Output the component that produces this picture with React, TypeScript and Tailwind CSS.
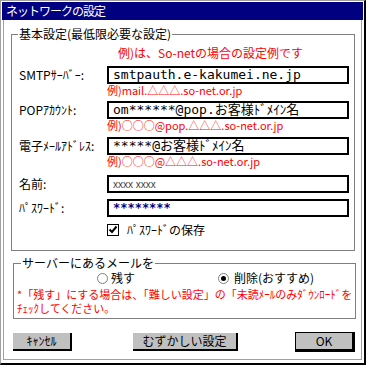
import React from "react";

const jp = "font-['Noto_Sans_CJK_JP',sans-serif]";
const mono = "font-['DejaVu_Sans_Mono','Noto_Sans_CJK_JP',monospace]";

function Field({ label, value, hint, className = "", valueClass = "" }) {
  return (
    <>
      <div className={`flex items-center h-[18px] pl-[7px] ${className}`}>
        <span className="w-[88px] text-[12px] leading-[18px] text-black whitespace-nowrap">{label}</span>
        <div className={`w-[242px] h-[18px] border-2 border-black bg-white pl-[4px] flex items-center whitespace-nowrap overflow-hidden ${valueClass}`}>
          {value}
        </div>
      </div>
      {hint && (
        <div className="pl-[95px] h-[12px] text-[11px] leading-[12px] text-[#ff0000] whitespace-nowrap">{hint}</div>
      )}
    </>
  );
}

function Button({ children, w, className = "" }) {
  return (
    <div
      className={`h-[18px] bg-[#c0c0c0] border-r-2 border-b-2 border-black flex items-center justify-center text-[12px] leading-[16px] text-black ${className}`}
      style={{ width: w }}
    >
      {children}
    </div>
  );
}

export default function App() {
  return (
    <div className={`w-[366px] h-[365px] bg-white border-l border-t border-[#a0a0a0] border-r-2 border-b-2 border-r-black border-b-black ${jp}`}>
      <div className="pt-[1px] px-[1px]">
        {/* title */}
        <div className="h-[18px] bg-[#000080] text-white text-[12px] tracking-[-1px] leading-[18px] pl-[4px]">ネットワークの設定</div>

        <div className="mx-[1px] h-[340px] border-x border-b border-[#a0a0a0] pt-[14px]">
          {/* 基本設定 */}
          <div className="relative ml-[7px] w-[344px] h-[217px] border border-[#808080]">
            <span className="absolute -top-[8px] left-[6px] bg-white px-[1px] text-[12px] leading-[14px] text-black whitespace-nowrap">基本設定(最低限必要な設定)</span>
            <div className="mt-[11px] h-[14px] pl-[106px] text-[12px] leading-[14px] text-[#ff0000] whitespace-nowrap">例)は、So-netの場合の設定例です</div>

            <Field className="mt-[6px]" label="SMTPｻｰﾊﾞｰ:" valueClass={`${mono} text-[13px]`} value="smtpauth.e-kakumei.ne.jp" hint="例)mail.△△△.so-net.or.jp" />
            <Field className="mt-[5px]" label="POPｱｶｳﾝﾄ:" valueClass={`${mono} text-[13px]`} value="om******@pop.お客様ﾄﾞﾒｲﾝ名" hint="例)○○○@pop.△△△.so-net.or.jp" />
            <Field className="mt-[6px]" label="電子ﾒｰﾙｱﾄﾞﾚｽ:" valueClass={`${mono} text-[13px]`} value="*****@お客様ﾄﾞﾒｲﾝ名" hint="例)○○○@△△△.so-net.or.jp" />
            <Field className="mt-[8px]" label="名前:" valueClass="font-['Liberation_Sans',sans-serif] text-[10px] text-[#404040]" value="xxxx xxxx" />
            <Field className="mt-[6px]" label="ﾊﾟｽﾜｰﾄﾞ:" valueClass={`${mono} text-[12px] font-bold text-[#000080] pl-[2px]`} value="********" />

            <div className="mt-[7px] h-[12px] pl-[95px] flex items-center gap-[8px]">
              <span className="w-[12px] h-[12px] border border-black bg-white flex items-center justify-center">
                <svg width="10" height="10" viewBox="0 0 10 10">
                  <path d="M1.5 4.5 L4 7 L8.5 1.5" fill="none" stroke="#000" strokeWidth="2" />
                </svg>
              </span>
              <span className="text-[12px] leading-[12px] text-black">ﾊﾟｽﾜｰﾄﾞの保存</span>
            </div>
          </div>

          {/* サーバーにあるメールを */}
          <div className="relative mt-[12px] ml-[9px] w-[343px] h-[56px] border border-[#808080]">
            <span className="absolute -top-[8px] left-[7px] bg-white px-[1px] text-[12px] leading-[14px] text-black whitespace-nowrap">サーバーにあるメールを</span>
            <div className="mt-[8px] h-[12px] pl-[83px] flex items-center">
              <div className="w-[121px] flex items-center gap-[3px]">
                <span className="w-[11px] h-[11px] rounded-full border border-[#808080] bg-white" />
                <span className="text-[12px] leading-[12px]">残す</span>
              </div>
              <div className="flex items-center gap-[5px]">
                <span className="w-[11px] h-[11px] rounded-full border border-[#808080] bg-white flex items-center justify-center">
                  <span className="w-[5px] h-[5px] rounded-full bg-black" />
                </span>
                <span className="text-[12px] leading-[12px]">削除(おすすめ)</span>
              </div>
            </div>
            <div className="mt-[3px] pl-[3px] text-[11px] leading-[14px] text-[#ff0000] whitespace-nowrap">
              <div className="h-[14px]">*「残す」にする場合は、「難しい設定」の「未読ﾒｰﾙのみﾀﾞｳﾝﾛｰﾄﾞを</div>
              <div className="h-[14px]">ﾁｪｯｸしてください｡</div>
            </div>
          </div>

          {/* buttons */}
          <div className="mt-[14px] pl-[9px] flex items-start">
            <Button w={59}>ｷｬﾝｾﾙ</Button>
            <Button w={105} className="ml-[61px]">むずかしい設定</Button>
            <div className="ml-[57px] -mt-[1px] border border-black">
              <Button w={58}>OK</Button>
            </div>
          </div>
        </div>
      </div>
    </div>
  );
}
